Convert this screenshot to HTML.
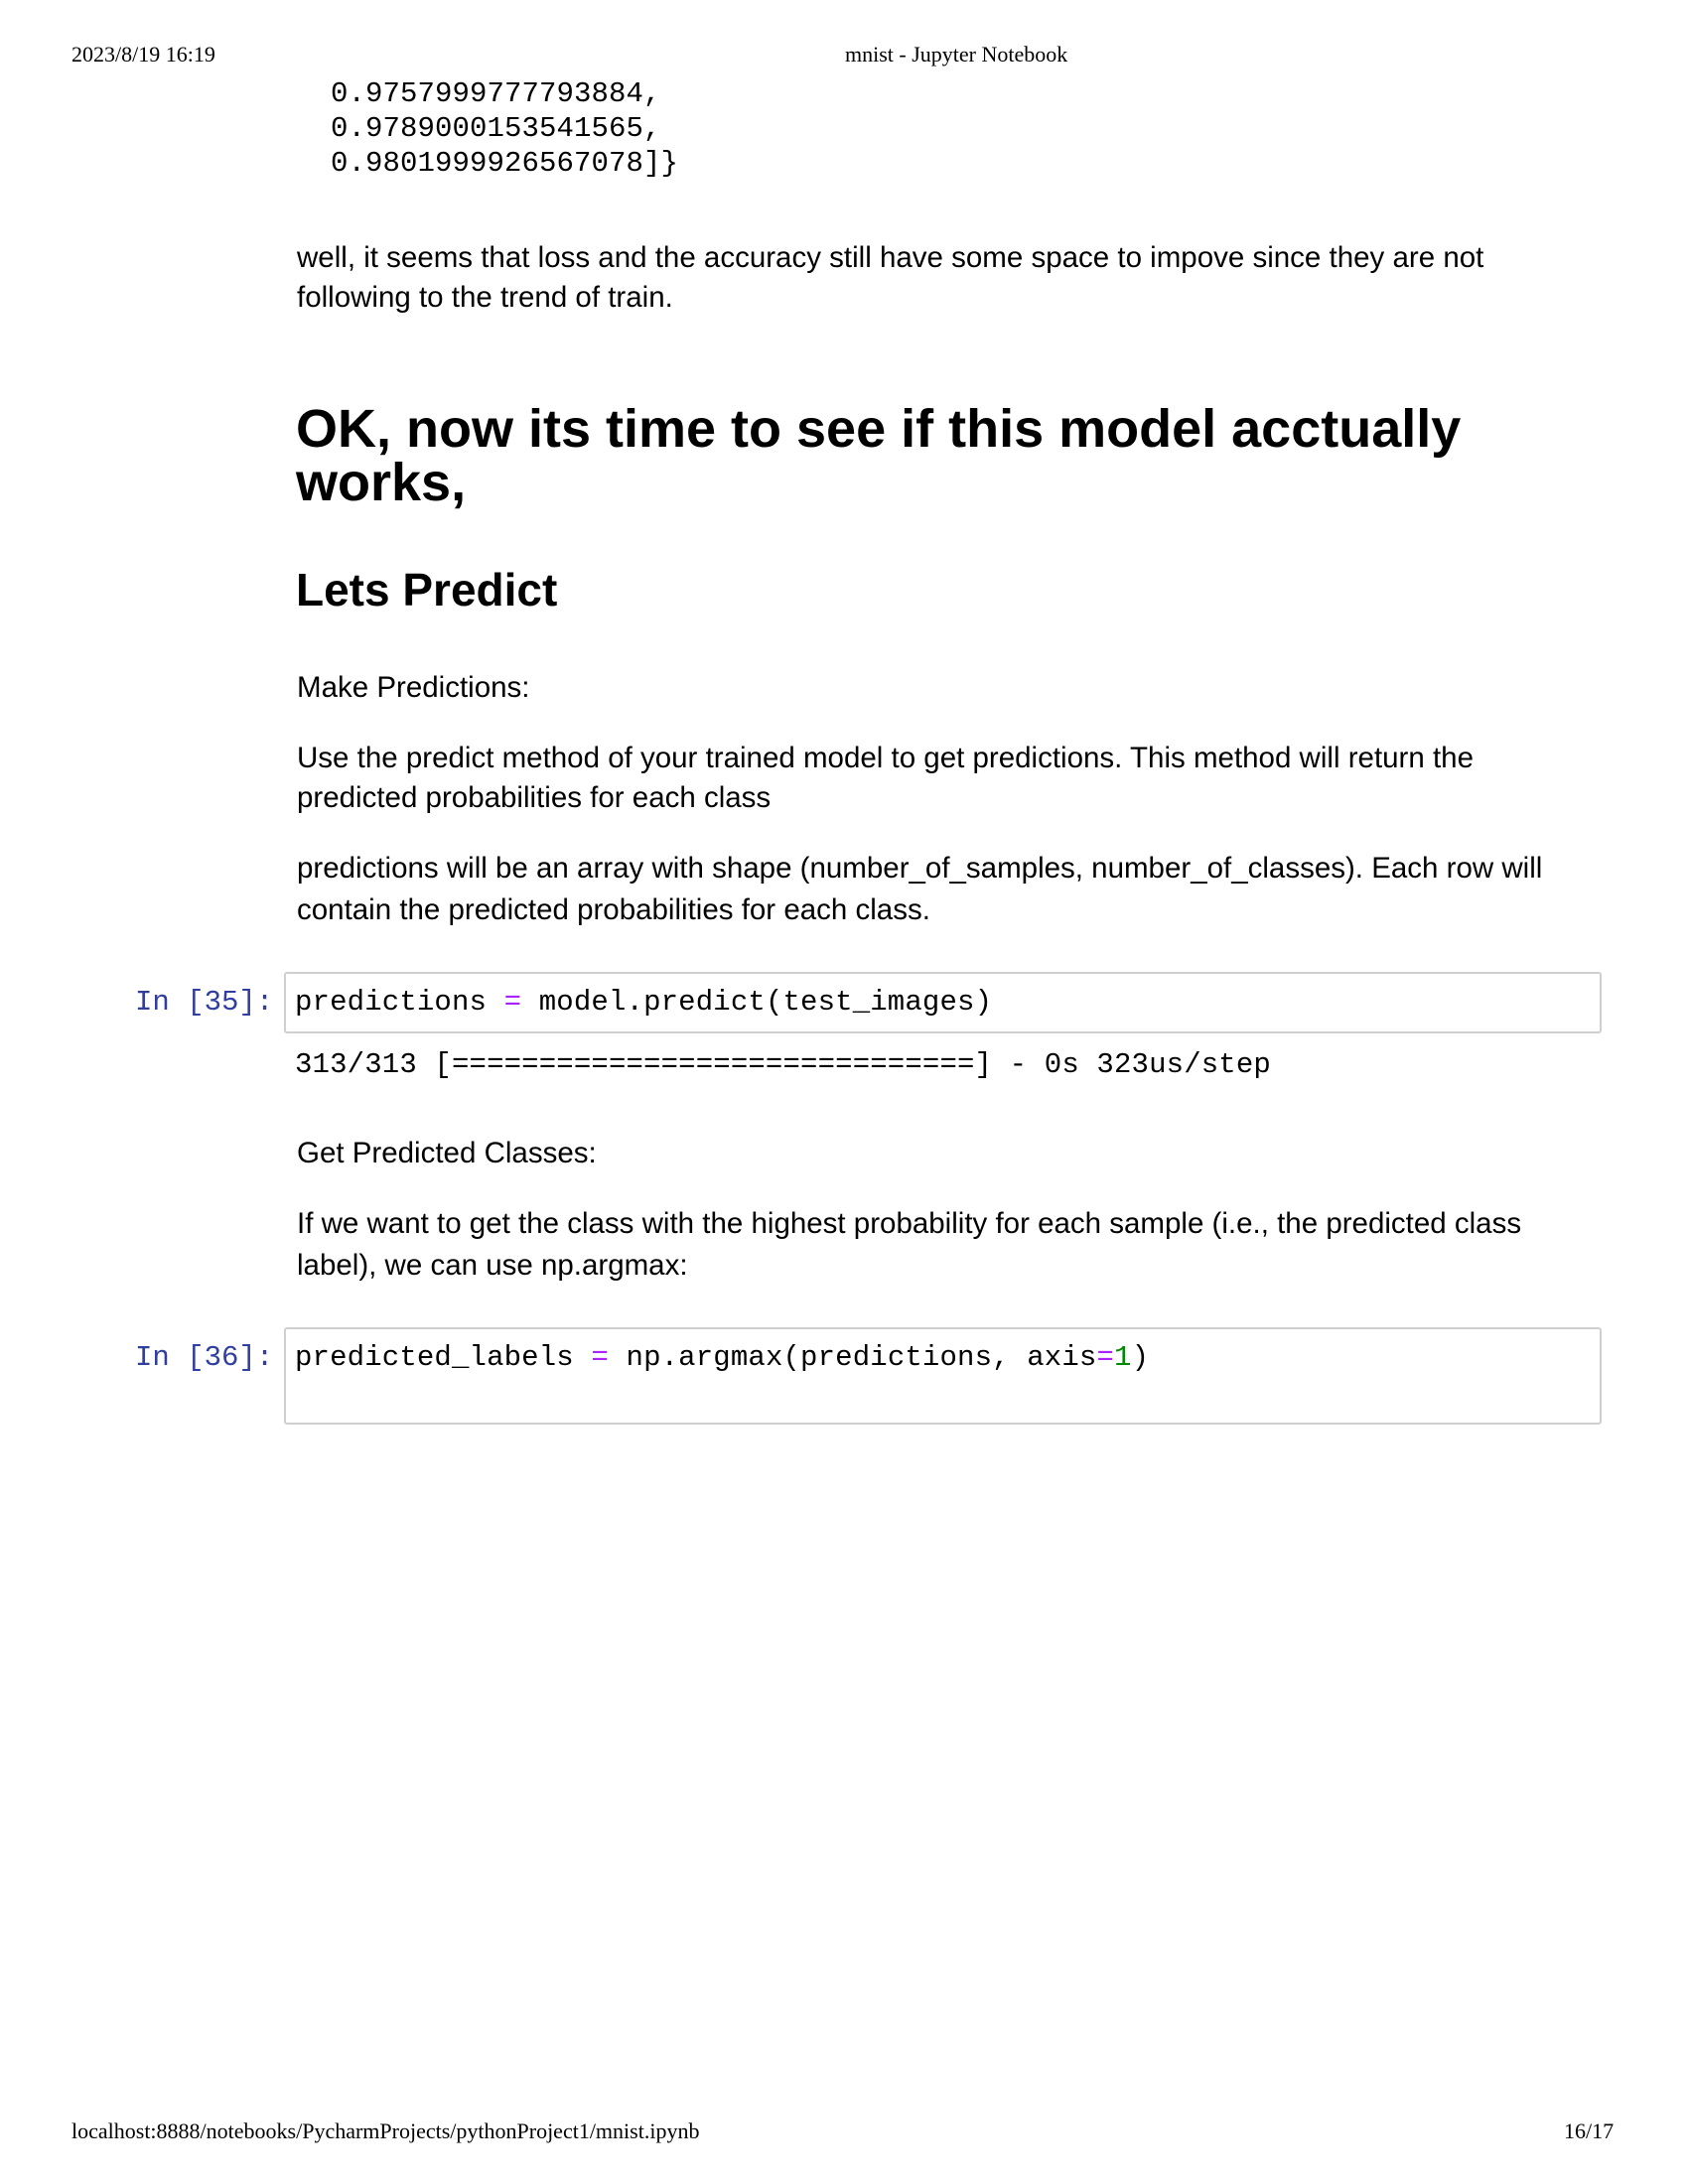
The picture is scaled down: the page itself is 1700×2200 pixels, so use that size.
<!DOCTYPE html>
<html><head><meta charset="utf-8"><style>
body{margin:0;background:#fff;width:1700px;height:2200px;position:relative;overflow:hidden;font-family:"Liberation Sans",sans-serif;color:#000}
.a{position:absolute;white-space:nowrap}
.hd{font-family:"Liberation Serif",serif;font-size:22px}
.p{font-size:29.5px;left:299px}
.m{font-family:"Liberation Mono",monospace;font-size:29px}
.box{position:absolute;left:286px;width:1323px;border:2px solid #cfcfcf;border-radius:3px;background:#fff}
.pr{color:#303f9f;left:136px}
.o{color:#aa22ff}
</style></head><body>
<div class="a hd" style="left:72px;top:42px">2023/8/19 16:19</div>
<div class="a hd" style="left:851px;top:42px">mnist - Jupyter Notebook</div>
<div class="a m" style="left:333px;top:78px;letter-spacing:0.1px">0.9757999777793884,</div>
<div class="a m" style="left:333px;top:113px;letter-spacing:0.1px">0.9789000153541565,</div>
<div class="a m" style="left:333px;top:148px;letter-spacing:0.1px">0.9801999926567078]}</div>
<div class="a p" style="top:243px">well, it seems that loss and the accuracy still have some space to impove since they are not</div>
<div class="a p" style="top:283px">following to the trend of train.</div>
<div class="a" style="left:298px;top:405px;font-size:54px;font-weight:bold;line-height:54px">OK, now its time to see if this model acctually<br>works,</div>
<div class="a" style="left:298px;top:567px;font-size:46px;font-weight:bold">Lets Predict</div>
<div class="a p" style="top:676px">Make Predictions:</div>
<div class="a p" style="top:747px">Use the predict method of your trained model to get predictions. This method will return the</div>
<div class="a p" style="top:787px">predicted probabilities for each class</div>
<div class="a p" style="top:858px">predictions will be an array with shape (number_of_samples, number_of_classes). Each row will</div>
<div class="a p" style="top:900px">contain the predicted probabilities for each class.</div>
<div class="box" style="top:979px;height:58px"></div>
<div class="a m pr" style="top:993px">In [35]:</div>
<div class="a m" style="left:297px;top:993px;letter-spacing:0.15px">predictions <span class="o">=</span> model.predict(test_images)</div>
<div class="a m" style="left:297px;top:1056px;letter-spacing:0.15px">313/313 [==============================] - 0s 323us/step</div>
<div class="a p" style="top:1145px">Get Predicted Classes:</div>
<div class="a p" style="top:1216px">If we want to get the class with the highest probability for each sample (i.e., the predicted class</div>
<div class="a p" style="top:1258px">label), we can use np.argmax:</div>
<div class="box" style="top:1337px;height:94px"></div>
<div class="a m pr" style="top:1351px">In [36]:</div>
<div class="a m" style="left:297px;top:1351px;letter-spacing:0.15px">predicted_labels <span class="o">=</span> np.argmax(predictions, axis<span class="o">=</span><span style="color:#080">1</span>)</div>
<div class="a hd" style="left:72px;top:2134px">localhost:8888/notebooks/PycharmProjects/pythonProject1/mnist.ipynb</div>
<div class="a hd" style="left:1560px;top:2134px;left:1575px">16/17</div>
</body></html>
